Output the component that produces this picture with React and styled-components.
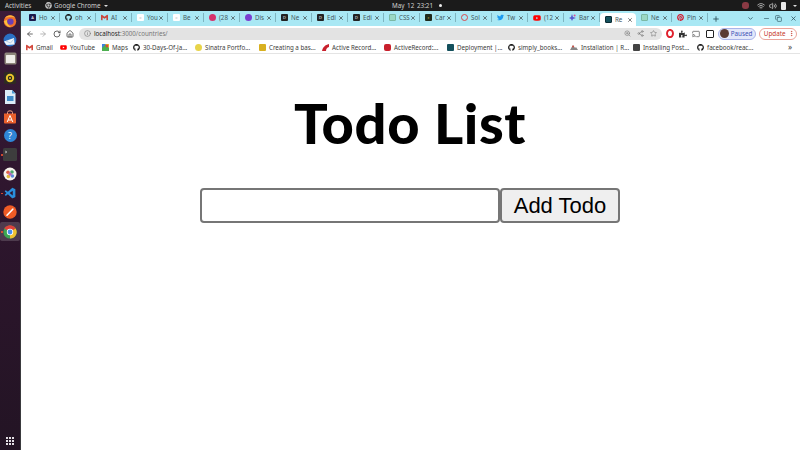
import React from "react";
import styled, { createGlobalStyle } from "styled-components";
import {
  FaGithub,
  FaTwitter,
  FaYoutube,
  FaPinterest,
  FaChrome,
  FaPuzzlePiece,
} from "react-icons/fa";
import { SiGmail } from "react-icons/si";
import { VscVscode } from "react-icons/vsc";
import {
  ArrowLeft,
  ArrowRight,
  RotateCw,
  Home,
  Info,
  ZoomIn,
  Share2,
  Star,
  Cast,
  X,
  Plus,
  ChevronDown,
  Minus,
  Copy,
  MoreVertical,
  Wifi,
  Volume2,
} from "lucide-react";

const GlobalStyle = createGlobalStyle`
  html, body {
    margin: 0;
    padding: 0;
    background: #fff;
  }
  * {
    box-sizing: border-box;
  }
`;

const Screen = styled.div`
  width: 800px;
  height: 450px;
  display: flex;
  flex-direction: column;
  overflow: hidden;
  font-family: "Noto Sans", "Open Sans", sans-serif;
`;

const TopBar = styled.div`
  height: 11px;
  flex: none;
  background: #1b1b1b;
  color: #cfcfcf;
  font-size: 6.3px;
  display: flex;
  align-items: center;
  padding: 0 5px;
  position: relative;
`;

const Activities = styled.span`
  width: 39px;
`;

const AppMenu = styled.span`
  display: flex;
  align-items: center;
  gap: 2px;
  margin-left: 1px;
`;

const Caret = styled.i`
  width: 0;
  height: 0;
  border-left: 2px solid transparent;
  border-right: 2px solid transparent;
  border-top: 2px solid #ddd;
  margin-left: 2px;
`;

const Clock = styled.span`
  position: absolute;
  left: 392px;
  display: flex;
  align-items: center;
  gap: 6px;
  word-spacing: 1px;
`;

const Dot = styled.i`
  width: 3px;
  height: 3px;
  border-radius: 50%;
  background: #eee;
`;

const Tray = styled.span`
  margin-left: auto;
  display: grid;
  grid-template-columns: 15px 12px 12px 10px 4px;
  align-items: center;
  color: #e4e4e4;
`;

const Battery = styled.i`
  width: 5px;
  height: 8px;
  background: #e8e8e8;
  border-radius: 1px;
`;

const Body = styled.div`
  flex: 1;
  display: flex;
  min-height: 0;
`;

const Dock = styled.div`
  width: 21px;
  flex: none;
  background: linear-gradient(180deg, #3b1b39 0%, #30162f 35%, #231424 100%);
  display: flex;
  flex-direction: column;
  align-items: center;
  border-right: 1px solid #3a3a3e;
`;

const DockSlot = styled.div`
  width: 20px;
  height: 19.2px;
  flex: none;
  display: flex;
  align-items: center;
  justify-content: center;
  border-radius: 2px;
  position: relative;
  background: ${(p) => (p.$active ? "rgba(255,255,255,.16)" : "transparent")};
  &::before {
    content: "";
    display: ${(p) => (p.$running ? "block" : "none")};
    position: absolute;
    left: 1px;
    top: 9px;
    width: 1.5px;
    height: 1.5px;
    border-radius: 50%;
    background: #e9542f;
  }
`;

const DockGrid = styled.div`
  margin-top: auto;
  margin-bottom: 5px;
  display: grid;
  grid-template-columns: repeat(3, 2px);
  gap: 1px;
  span {
    width: 2px;
    height: 2px;
    background: #e4dfe4;
  }
`;

const Browser = styled.div`
  flex: 1;
  min-width: 0;
  display: flex;
  flex-direction: column;
`;

const TabStrip = styled.div`
  height: 15px;
  flex: none;
  background: #a9e8f4;
  display: flex;
  align-items: flex-start;
  padding-left: 3px;
  color: #333;
`;

const Tab = styled.div`
  width: 36px;
  flex: none;
  display: flex;
  align-items: center;
  padding: 0 3px 0 5px;
  font-size: 6.2px;
  overflow: hidden;
  white-space: nowrap;
  background: ${(p) => (p.$active ? "#fff" : "transparent")};
  border-radius: ${(p) => (p.$active ? "4px 4px 0 0" : "0")};
  border-right: ${(p) => (p.$active ? "0" : "1px solid #7fb5c0")};
  height: ${(p) => (p.$active ? "13px" : "9px")};
  margin-top: 2px;
  svg {
    flex: none;
  }
`;

const TabTitle = styled.span`
  flex: 1;
  min-width: 0;
  margin-left: 3px;
  color: #44585d;
`;

const Square = styled.span`
  width: ${(p) => p.$size || 7}px;
  height: ${(p) => p.$size || 7}px;
  flex: none;
  background: ${(p) => p.$bg};
  border: ${(p) => (p.$edge ? `1px solid ${p.$edge}` : "0")};
  border-radius: ${(p) => p.$radius || 1}px;
  color: ${(p) => p.$fg || "#fff"};
  display: inline-flex;
  align-items: center;
  justify-content: center;
  font-size: ${(p) => (p.$size ? 9 : 4)}px;
  line-height: 1;
  overflow: hidden;
`;

const StripButtons = styled.div`
  flex: 1;
  height: 15px;
  display: flex;
  align-items: center;
  padding-right: 3px;
  color: #264a55;
`;

const NewTab = styled.span`
  margin-left: 4px;
  margin-right: auto;
  display: flex;
`;

const WindowButtons = styled.div`
  display: grid;
  grid-template-columns: 16px 12px 15px 7px;
  align-items: center;
`;

const Toolbar = styled.div`
  height: 15px;
  flex: none;
  background: #fff;
  display: flex;
  align-items: center;
  padding: 0 3px 0 5px;
  color: #4a4a4a;
`;

const NavIcons = styled.div`
  display: flex;
  align-items: center;
  gap: 5.3px;
  margin-right: 5px;
`;

const Omnibox = styled.div`
  width: 583px;
  flex: none;
  height: 12px;
  border-radius: 6px;
  background: #e3e3e3;
  display: flex;
  align-items: center;
  padding: 0 5px;
  font-size: 6.2px;
  color: #777;
  gap: 3px;
`;

const UrlHost = styled.b`
  font-weight: 400;
  color: #222;
`;

const OmniActions = styled.div`
  margin-left: auto;
  display: flex;
  align-items: center;
  gap: 6px;
`;

const ExtIcons = styled.div`
  display: flex;
  align-items: center;
  gap: 5.3px;
  margin-left: 4px;
  margin-right: 4px;
`;

const Pill = styled.div`
  width: 38px;
  height: 12px;
  flex: none;
  border-radius: 6px;
  border: 1px solid ${(p) => p.$line};
  background: ${(p) => p.$bg};
  color: ${(p) => p.$fg};
  font-size: 6.3px;
  display: flex;
  align-items: center;
  gap: 2px;
  padding: 0 1px;
  margin-right: 3px;
  &:last-child {
    margin-right: 0;
    padding-left: 4px;
    justify-content: space-between;
  }
`;

const Avatar = styled.span`
  width: 9px;
  height: 9px;
  border-radius: 50%;
  background: #5a3b33;
  flex: none;
`;

const Bookmarks = styled.div`
  height: 13px;
  flex: none;
  background: #fff;
  border-bottom: 1px solid #e4e4e4;
  display: flex;
  align-items: center;
  padding-left: 5px;
  font-size: 6.2px;
  color: #3c3c3c;
`;

const Bookmark = styled.div`
  width: ${(p) => p.$w}px;
  flex: none;
  display: flex;
  align-items: center;
  gap: 3px;
  overflow: hidden;
  white-space: nowrap;
`;

const More = styled.span`
  margin-left: auto;
  margin-right: 8px;
  font-size: 8px;
  line-height: 1;
`;

const Page = styled.main`
  flex: 1;
  background: #fff;
  display: flex;
  flex-direction: column;
  align-items: center;
  padding-right: 1px;
`;

const Title = styled.h1`
  margin: 27px 0 0;
  font-family: "Lato", "Open Sans", sans-serif;
  font-size: 56px;
  line-height: 84px;
  font-weight: 900;
  letter-spacing: 0.6px;
  color: #000;
`;

const TodoForm = styled.form`
  margin-top: 23px;
  display: flex;
`;

const TodoInput = styled.input`
  width: 300px;
  height: 35px;
  border: 2px solid #767676;
  border-radius: 4px;
  background: #fff;
  outline: none;
`;

const AddButton = styled.button`
  width: 120px;
  height: 35px;
  padding: 0;
  border: 2px solid #767676;
  border-radius: 4px;
  background: #efefef;
  color: #000;
  font-family: "Liberation Sans", Arial, sans-serif;
  font-size: 22px;
`;

const Firefox = () => (
  <svg width="14" height="14" viewBox="0 0 14 14">
    <circle cx="7" cy="7.4" r="6.2" fill="#f0702a" />
    <path d="M2 4 C4 0.5 10 0 12.5 4 C10 2.6 5 3 2 4Z" fill="#fbb03b" />
    <circle cx="7.4" cy="7.6" r="3.2" fill="#6a3fb5" />
    <path d="M1 7 C2 11 5 13 8 13 C5 11 3.5 9 4 6Z" fill="#f9c23c" />
  </svg>
);

const Thunderbird = () => (
  <svg width="14" height="14" viewBox="0 0 14 14">
    <circle cx="7" cy="7" r="6.4" fill="#2a6fc4" />
    <path d="M1 8.5 L11 5 L11.6 11.5 L3.5 12 Z" fill="#eef4fa" />
    <path d="M3 8 L7.5 10 L11 6" fill="none" stroke="#a8c4e0" strokeWidth=".8" />
  </svg>
);

const Files = () => (
  <svg width="13" height="13" viewBox="0 0 13 13">
    <rect x=".5" y=".5" width="12" height="12" rx="1.5" fill="#8d857a" />
    <rect x="2" y="3" width="9" height="8" rx=".5" fill="#efece7" />
  </svg>
);

const Rhythmbox = () => (
  <svg width="12" height="12" viewBox="0 0 12 12">
    <rect width="12" height="12" rx="1.5" fill="#2e2a22" />
    <circle cx="6" cy="6" r="4.2" fill="#e9c42c" />
    <circle cx="6" cy="6" r="2.2" fill="#2e2a22" />
    <circle cx="6" cy="6" r="1" fill="#e9c42c" />
  </svg>
);

const Writer = () => (
  <svg width="12" height="14" viewBox="0 0 12 14">
    <path d="M1 0 H8 L11.5 3.5 V14 H1Z" fill="#dcecf8" />
    <path d="M8 0 L11.5 3.5 H8Z" fill="#4a9ad4" />
    <rect x="3" y="6" width="6.5" height="5" fill="#3f8ac8" />
  </svg>
);

const Software = () => (
  <svg width="14" height="14" viewBox="0 0 14 14">
    <path d="M1 3.5 H13 V12.5 Q13 13.5 12 13.5 H2 Q1 13.5 1 12.5Z" fill="#e9602c" />
    <path d="M4.5 4 V2.5 Q4.5 .8 7 .8 Q9.5 .8 9.5 2.5 V4" fill="none" stroke="#f0a080" />
    <path d="M4.2 12 L7 5.5 L9.8 12 M5.2 10 H8.8" fill="none" stroke="#fff" strokeWidth="1" />
  </svg>
);

const Terminal = () => (
  <svg width="14" height="13" viewBox="0 0 14 13">
    <rect width="14" height="13" rx="1.5" fill="#3d3d3d" />
    <path d="M2 3 L4 4 L2 5" fill="none" stroke="#cfcfcf" strokeWidth=".7" />
  </svg>
);

const Palette = () => (
  <svg width="14" height="14" viewBox="0 0 14 14">
    <circle cx="7" cy="7" r="6.5" fill="#f6f2ec" />
    <circle cx="5" cy="5.2" r="1.8" fill="#e0604a" />
    <circle cx="9" cy="5" r="1.8" fill="#4aa86a" />
    <circle cx="9.4" cy="9" r="1.8" fill="#5a8ad8" />
    <circle cx="5.4" cy="9.4" r="1.8" fill="#e2b83c" />
    <circle cx="7.2" cy="7.2" r="1.6" fill="#b06ac0" />
  </svg>
);

const Postman = () => (
  <svg width="14" height="14" viewBox="0 0 14 14">
    <circle cx="7" cy="7" r="6.7" fill="#ef5b25" />
    <path d="M4 10.2 L9.8 4.2" stroke="#fff" strokeWidth="1.6" strokeLinecap="round" />
  </svg>
);

const Chrome = ({ size = 14 }) => (
  <svg width={size} height={size} viewBox="0 0 14 14">
    <circle cx="7" cy="7" r="6.6" fill="#3ca651" />
    <path d="M7 7 L1.3 3.6 A6.6 6.6 0 0 1 12.7 3.6Z" fill="#e0413a" />
    <path d="M7 7 L12.7 3.6 A6.6 6.6 0 0 1 7 13.6Z" fill="#f2c230" />
    <circle cx="7" cy="7" r="3.2" fill="#fff" />
    <circle cx="7" cy="7" r="2.4" fill="#4a8fe8" />
  </svg>
);

const MapsPin = () => (
  <svg width="7" height="7" viewBox="0 0 7 7">
    <rect width="7" height="7" fill="#4caf50" />
    <path d="M0 0 H4 L0 4Z" fill="#3f7fe0" />
    <path d="M7 0 V4 L3 0Z" fill="#e8c22c" />
    <circle cx="5" cy="2" r="1.4" fill="#d84a3c" />
  </svg>
);

const Rails = () => (
  <svg width="7" height="7" viewBox="0 0 7 7">
    <path d="M0 7 C1 3 3 1 7 0 V3 C5 3.5 4 5 4 7Z" fill="#c8202c" />
  </svg>
);

const Peak = () => (
  <svg width="8" height="6" viewBox="0 0 8 6">
    <path d="M0 6 L3 1 L5 4 L6 3 L8 6Z" fill="#888" />
    <path d="M3 1 L4.5 3.5 L3 3 L1.8 3.4Z" fill="#d8483c" />
  </svg>
);

const Sparkle = () => (
  <svg width="7" height="7" viewBox="0 0 7 7">
    <path d="M3 0 L4 3 L7 4 L4 5 L3 7 L2 5 L0 4 L2 3Z" fill="#5a5ad0" />
    <circle cx="5.6" cy="1.4" r="1" fill="#d8509a" />
  </svg>
);

const Opera = () => (
  <svg width="8" height="9" viewBox="0 0 8 9">
    <ellipse cx="4" cy="4.5" rx="3" ry="3.6" fill="none" stroke="#e0202c" strokeWidth="1.9" />
  </svg>
);

const tabs = [
  { t: "Ho", i: <Square $bg="#1a1a4a">A</Square> },
  { t: "oh", i: <FaGithub size={7} color="#111" /> },
  { t: "AI", i: <SiGmail size={7} color="#c9463c" /> },
  { t: "You", i: <Square $bg="#fff" $fg="#888">=</Square> },
  { t: "Be", i: <Square $bg="#fff" $fg="#888">=</Square> },
  { t: "(28", i: <Square $bg="#d6336c" $radius={4} /> },
  { t: "Dis", i: <Square $bg="#7a3fd0" $radius={4} /> },
  { t: "Ne", i: <Square $bg="#222">D</Square> },
  { t: "Edi", i: <Square $bg="#222">D</Square> },
  { t: "Edi", i: <Square $bg="#222">D</Square> },
  { t: "CSS", i: <Square $bg="#9bd8c4" $edge="#7bb8a4" /> },
  { t: "Car", i: <Square $bg="#1f2a1c" $fg="#d8c24a">c</Square> },
  { t: "Sol", i: <Square $bg="transparent" $edge="#d8484c" $radius={4} /> },
  { t: "Tw", i: <FaTwitter size={7} color="#1d9bf0" /> },
  { t: "(12", i: <FaYoutube size={8} color="#f00" /> },
  { t: "Bar", i: <Sparkle /> },
  { t: "Re", i: <Square $bg="#14505c" $edge="#0c2c34" />, active: true },
  { t: "Ne", i: <Square $bg="#9bd8c4" $edge="#7bb8a4" /> },
  { t: "Pin", i: <FaPinterest size={7} color="#d3182c" /> },
];

const bookmarks = [
  { t: "Gmail", w: 34, i: <SiGmail size={7} color="#d3483c" /> },
  { t: "YouTube", w: 42, i: <FaYoutube size={7} color="#f00" /> },
  { t: "Maps", w: 31, i: <MapsPin /> },
  { t: "30-Days-Of-Ja...", w: 62, i: <FaGithub size={7} color="#111" /> },
  { t: "Sinatra Portfo...", w: 64, i: <Square $bg="#e8d44a" $radius={4} /> },
  { t: "Creating a bas...", w: 63, i: <Square $bg="#d8b020" /> },
  { t: "Active Record...", w: 62, i: <Rails /> },
  { t: "ActiveRecord:...", w: 63, i: <Square $bg="#c8202c" $radius={2} /> },
  { t: "Deployment |...", w: 61, i: <Square $bg="#14505c" /> },
  { t: "simply_books...", w: 62, i: <FaGithub size={7} color="#111" /> },
  { t: "Installation | R...", w: 63, i: <Peak /> },
  { t: "Installing Post...", w: 64, i: <Square $bg="#444" /> },
  { t: "facebook/reac...", w: 60, i: <FaGithub size={7} color="#111" /> },
];

const dockApps = [
  <Firefox />,
  <Thunderbird />,
  <Files />,
  <Rhythmbox />,
  <Writer />,
  <Software />,
  <Square $size={13} $bg="#2f86d8" $radius={7}>?</Square>,
  <Terminal />,
  <Palette />,
  <VscVscode size={13} color="#2a8fdc" />,
  <Postman />,
  <Chrome />,
];

const running = [7, 9, 11];

export default function App() {
  return (
    <Screen>
      <GlobalStyle />
      <TopBar>
        <Activities>Activities</Activities>
        <AppMenu>
          <FaChrome size={7} color="#bbb" />
          Google Chrome
          <Caret />
        </AppMenu>
        <Clock>
          May 12 23:21
          <Dot />
        </Clock>
        <Tray>
          <Square $bg="#8a3a44" $radius={3} />
          <Wifi size={8} />
          <Volume2 size={8} />
          <Battery />
          <Caret />
        </Tray>
      </TopBar>
      <Body>
        <Dock>
          {dockApps.map((app, index) => (
            <DockSlot
              key={index}
              $active={index === 11}
              $running={running.includes(index)}
            >
              {app}
            </DockSlot>
          ))}
          <DockGrid>
            {Array.from({ length: 9 }, (_, index) => (
              <span key={index} />
            ))}
          </DockGrid>
        </Dock>
        <Browser>
          <TabStrip>
            {tabs.map((tab, index) => (
              <Tab key={index} $active={tab.active}>
                {tab.i}
                <TabTitle>{tab.t}</TabTitle>
                <X size={6} strokeWidth={2.5} />
              </Tab>
            ))}
            <StripButtons>
              <NewTab>
                <Plus size={8} strokeWidth={2.5} />
              </NewTab>
              <WindowButtons>
                <ChevronDown size={7} strokeWidth={2.5} />
                <Minus size={7} />
                <Copy size={7} />
                <X size={7} strokeWidth={2.5} />
              </WindowButtons>
            </StripButtons>
          </TabStrip>
          <Toolbar>
            <NavIcons>
              <ArrowLeft size={8} strokeWidth={2.5} />
              <ArrowRight size={8} color="#aaa" strokeWidth={2.5} />
              <RotateCw size={8} strokeWidth={2.5} />
              <Home size={8} strokeWidth={2.5} />
            </NavIcons>
            <Omnibox>
              <Info size={7} />
              <span>
                <UrlHost>localhost</UrlHost>:3000/countries/
              </span>
              <OmniActions>
                <ZoomIn size={7} />
                <Share2 size={7} />
                <Star size={7} />
              </OmniActions>
            </Omnibox>
            <ExtIcons>
              <Opera />
              <FaPuzzlePiece size={8} color="#333" />
              <Cast size={8} />
              <Square $size={8} $bg="#fff" $edge="#222" />
            </ExtIcons>
            <Pill $line="#a9b4ea" $bg="#e3e8fa" $fg="#3f51b5">
              <Avatar />
              Paused
            </Pill>
            <Pill $line="#eaa49a" $bg="#fff" $fg="#c5392b">
              Update
              <MoreVertical size={7} />
            </Pill>
          </Toolbar>
          <Bookmarks>
            {bookmarks.map((item) => (
              <Bookmark key={item.t} $w={item.w}>
                {item.i}
                {item.t}
              </Bookmark>
            ))}
            <More>»</More>
          </Bookmarks>
          <Page>
            <Title>Todo List</Title>
            <TodoForm>
              <TodoInput type="text" />
              <AddButton type="button">Add Todo</AddButton>
            </TodoForm>
          </Page>
        </Browser>
      </Body>
    </Screen>
  );
}
